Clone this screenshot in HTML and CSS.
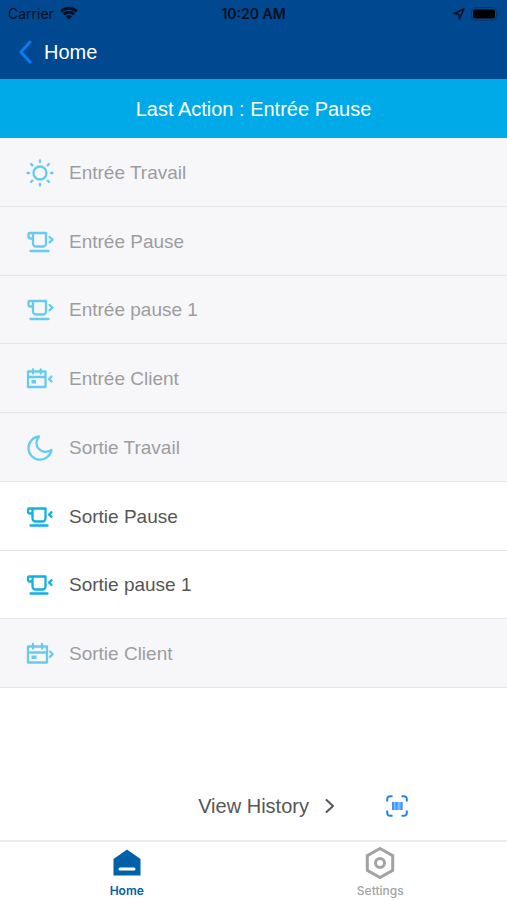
FILE: index.html
```html
<!DOCTYPE html>
<html lang="fr">
<head>
    <meta charset="UTF-8">
    <meta name="viewport" content="width=device-width, initial-scale=1.0">
    <title>Home</title>
    <link rel="stylesheet" href="styles.css">
</head>
<body>
    <svg class="sprite" aria-hidden="true">
        <symbol id="sun" viewBox="0 0 30 30">
            <circle cx="15" cy="15" r="6.5"/>
            <path d="M15 2.500v1.500M15 26v1.500M2.500 15h1.500M26 15h1.500M6 6l1.400 1.400M22.600 22.600l1.400 1.400M6 24l1.400-1.400M22.600 7.400l1.400-1.400"/>
        </symbol>
        <symbol id="cup-in" viewBox="0 0 30 30">
            <path d="M8 6h13v10.500a3 3 0 0 1-3 3h-7a3 3 0 0 1-3-3zM8 6H4.500a1 1 0 0 0-1 1v2.500a2 2 0 0 0 2 2H8M5.500 24h18M24.500 10l3 2.700-3 2.700"/>
        </symbol>
        <symbol id="cup-out" viewBox="0 0 30 30">
            <path d="M7.500 6.500h13v10a3 3 0 0 1-3 3h-7a3 3 0 0 1-3-3zM7.500 6.500H4a1 1 0 0 0-1 1V9.500a2 2 0 0 0 2 2h2.500M5.500 23.500h17M26.500 10.200l-2.500 2.300 2.500 2.300"/>
        </symbol>
        <symbol id="calendar-in" viewBox="0 0 30 30">
            <path d="M3 7.500h17.500v15.500H3zM3 13h17.500M8 5.500v4M15.700 5.500v4M26.500 12.500L24 15l2.500 2.500"/>
            <rect class="solid" x="6.500" y="16" width="4.500" height="3.500"/>
        </symbol>
        <symbol id="calendar-out" viewBox="0 0 30 30">
            <path d="M3 7.500h19v16H3zM3 13.500h19M8 5v4.500M17 5v4.500M25 12.500l2.700 2.700-2.700 2.700"/>
            <rect class="solid" x="6.500" y="16.500" width="5" height="3.500"/>
        </symbol>
        <symbol id="moon" viewBox="0 0 30 30">
            <path d="M14 3.500A11.600 11.600 0 1 0 26.500 17C22 19.500 17 19.200 13.700 15.800C10.600 12.500 10.600 7.500 14 3.500z"/>
        </symbol>
    </svg>

    <header class="top">
        <div class="status">
            <span class="carrier">Carrier
                <svg class="wifi" viewBox="0 0 18 14" aria-hidden="true">
                    <path d="M1.200 5.300a11.300 11.300 0 0 1 15.600 0M4 8.300a7.200 7.200 0 0 1 10 0"/>
                    <path class="solid" d="M9 13.500L6 10.500a4.300 4.300 0 0 1 6 0z"/>
                </svg>
            </span>
            <time class="clock">10:20 AM</time>
            <span class="indicators">
                <svg class="location" viewBox="0 0 12 12" aria-hidden="true"><path d="M11 1L1 5.500l4.700.8L6.500 11z"/></svg>
                <svg class="battery" viewBox="0 0 28 14" aria-hidden="true">
                    <rect class="shell" x=".5" y=".5" width="25" height="13" rx="4"/>
                    <rect x="2" y="2.500" width="22" height="9" rx="2"/>
                    <path class="shell-tip" d="M26.500 5v4q1.500-2 0-4z"/>
                </svg>
            </span>
        </div>
        <a class="back" href="#">
            <svg viewBox="0 0 14 24" aria-hidden="true"><path d="M12 2L3 12l9 10"/></svg>
            Home
        </a>
    </header>

    <p class="last-action">Last Action : Entrée Pause</p>

    <main class="actions">
        <button class="action" type="button" disabled><svg class="icon"><use href="#sun"/></svg>Entrée Travail</button>
        <button class="action" type="button" disabled><svg class="icon"><use href="#cup-in"/></svg>Entrée Pause</button>
        <button class="action" type="button" disabled><svg class="icon"><use href="#cup-in"/></svg>Entrée pause 1</button>
        <button class="action" type="button" disabled><svg class="icon"><use href="#calendar-in"/></svg>Entrée Client</button>
        <button class="action" type="button" disabled><svg class="icon"><use href="#moon"/></svg>Sortie Travail</button>
        <button class="action" type="button"><svg class="icon"><use href="#cup-out"/></svg>Sortie Pause</button>
        <button class="action" type="button"><svg class="icon"><use href="#cup-out"/></svg>Sortie pause 1</button>
        <button class="action" type="button" disabled><svg class="icon"><use href="#calendar-out"/></svg>Sortie Client</button>
    </main>

    <div class="tools">
        <div class="tools-group">
            <a class="history" href="#">View History
                <svg viewBox="0 0 10 16" aria-hidden="true"><path d="M1.500 2L8 8l-6.500 6"/></svg>
            </a>
            <button class="scan" type="button" aria-label="Scan">
                <svg viewBox="0 0 22 22" aria-hidden="true">
                    <path d="M1.200 6.500V4a2.800 2.800 0 0 1 2.800-2.800h2.500M15.500 1.200H18A2.800 2.800 0 0 1 20.800 4v2.500M20.800 15.500V18a2.800 2.800 0 0 1-2.800 2.800h-2.500M6.500 20.800H4A2.800 2.800 0 0 1 1.200 18v-2.500"/>
                    <rect class="code" x="6" y="7" width="10.500" height="8"/>
                    <path class="bars" d="M7 7v8M10.500 7v8M15.500 7v8"/>
                </svg>
            </button>
        </div>
    </div>

    <nav class="tabs">
        <a class="tab active" href="#">
            <svg viewBox="0 0 30 32" aria-hidden="true">
                <path class="solid" d="M15 2.500L28.500 12v16.500H1.500V12z"/>
                <path class="slot" d="M8 22h14"/>
            </svg>
            Home
        </a>
        <a class="tab" href="#">
            <svg viewBox="0 0 30 32" aria-hidden="true">
                <path d="M15 1.500L27.700 8.700v14.600L15 30.500 2.300 23.300V8.700z"/>
                <circle cx="15" cy="16" r="4.500"/>
            </svg>
            Settings
        </a>
    </nav>
</body>
</html>
```
FILE: styles.css
```css
* {
    box-sizing: border-box;
}
body {
    margin: 0;
    min-height: 100vh;
    display: flex;
    flex-direction: column;
    background: #fff;
    color: #565656;
    font-family: "Liberation Sans", Arial, sans-serif;
    font-size: 20px;
    line-height: 24px;
}
a {
    color: inherit;
    text-decoration: none;
}
button {
    border: 0;
    padding: 0;
    background: none;
    font: inherit;
    color: inherit;
}
svg {
    display: block;
    flex: none;
    fill: none;
    stroke: currentColor;
    stroke-width: 2;
    stroke-linecap: round;
    stroke-linejoin: round;
}
.sprite {
    position: absolute;
    width: 0;
    height: 0;
}
.solid {
    fill: currentColor;
    stroke: none;
}

/* Header */
.top {
    height: 79px;
    background: #00488f;
}
.status {
    display: grid;
    grid-template-columns: 1fr auto 1fr;
    align-items: center;
    height: 28px;
    padding: 0 8px;
    color: #04101f;
    font-family: Inter, sans-serif;
    font-size: 14px;
    line-height: 16px;
}
.carrier {
    display: flex;
    gap: 6px;
}
.clock {
    font-weight: 600;
}
.wifi {
    width: 18px;
    height: 14px;
    stroke-width: 3;
    stroke-linecap: butt;
}
.indicators {
    display: flex;
    align-items: center;
    justify-content: flex-end;
    gap: 6px;
}
.location {
    width: 12px;
    height: 12px;
    stroke-width: 1.4;
}
.battery {
    width: 28px;
    height: 14px;
    fill: #000;
    stroke: none;
}
.battery .shell {
    fill: none;
    stroke: #043770;
    stroke-width: 1;
}
.battery .shell-tip {
    fill: #043770;
}
.back {
    display: inline-flex;
    align-items: center;
    gap: 12px;
    padding: 12px 18px;
    color: #fff;
}
.back svg {
    width: 14px;
    height: 24px;
    color: #087cf5;
    stroke-width: 3;
}
.last-action {
    margin: 0;
    padding: 18px 16px 17px;
    background: #00a9e8;
    color: #fff;
    text-align: center;
}

/* Action list */
.actions {
    flex: 1;
    display: flex;
    flex-direction: column;
}
.action {
    flex: 1;
    display: flex;
    align-items: center;
    gap: 14px;
    min-height: 56px;
    padding: 2px 25px 0;
    border-bottom: 1px solid #e5e5e9;
    font-size: 19px;
    text-align: left;
}
.action:disabled {
    background: #f7f7fa;
    color: #9d9d9f;
}
.icon {
    width: 30px;
    height: 30px;
    color: #12afe4;
    stroke-width: 2.3;
}
.action:disabled .icon {
    color: #66cbee;
}

/* History and scan */
.tools {
    display: grid;
    grid-template-columns: 2fr auto 1fr;
    padding: 102px 0 18px;
}
.tools-group {
    grid-column: 2;
    display: flex;
    align-items: center;
    gap: 51px;
    height: 32px;
}
.history {
    display: flex;
    align-items: center;
    gap: 16px;
}
.history svg {
    width: 10px;
    height: 16px;
}
.scan svg {
    width: 22px;
    height: 22px;
    color: #2582ed;
    stroke-linecap: butt;
}
.scan .code {
    fill: #7fbcff;
    stroke: none;
}
.scan .bars {
    stroke: #3e94f8;
}

/* Bottom tabs */
.tabs {
    display: flex;
    height: 60px;
    border-top: 2px solid #ececee;
}
.tab {
    flex: 1;
    display: flex;
    flex-direction: column;
    align-items: center;
    gap: 4px;
    padding-top: 5px;
    color: #a3a3a3;
    font-family: Inter, sans-serif;
    font-size: 12px;
    font-weight: 500;
    line-height: 16px;
}
.tab svg {
    width: 30px;
    height: 32px;
    stroke-width: 3;
    stroke-linejoin: miter;
}
.tab.active {
    color: #0060a8;
    font-weight: 600;
}
.slot {
    stroke: #fff;
}
```
